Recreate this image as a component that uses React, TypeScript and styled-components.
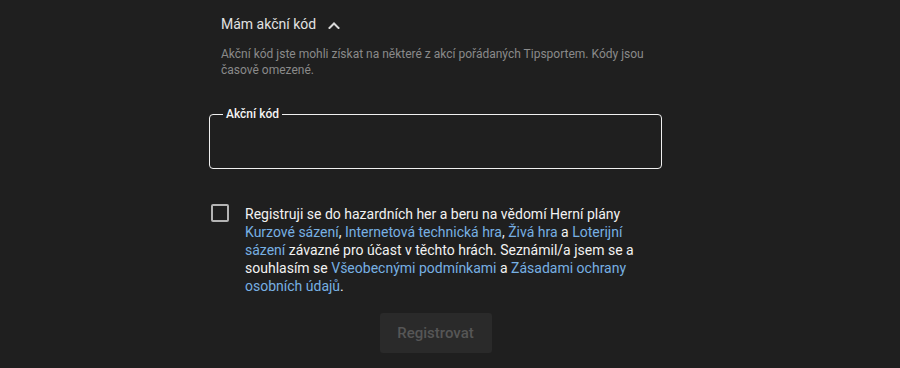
import styled, { createGlobalStyle } from 'styled-components';

const GlobalStyle = createGlobalStyle`
  html, body {
    margin: 0;
    padding: 0;
    background: #1f1f1f;
  }
  body {
    font-family: Roboto, "Noto Sans", Arial, sans-serif;
    color: #e6e6e6;
  }
`;

function ChevronUp () {
  return (
    <svg width="12" height="8" viewBox="0 0 12 8" fill="none">
      <path d="M1.5 7 L6 2.5 L10.5 7" stroke="#d8d8d8" strokeWidth="2" strokeLinecap="square" />
    </svg>
  );
}

function App () {
  return (
    <>
      <GlobalStyle />
      <Page>
        <Form>
          <Toggle type="button">
            Mám akční kód
            <ChevronUp />
          </Toggle>

          <Hint>
            Akční kód jste mohli získat na některé z akcí pořádaných Tipsportem. Kódy jsou časově omezené.
          </Hint>

          <Field>
            <legend>Akční kód</legend>
            <input type="text" />
          </Field>

          <Consent>
            <Box type="checkbox" />
            <ConsentText>
              Registruji se do hazardních her a beru na vědomí Herní plány{' '}
              <Link href="#">Kurzové sázení</Link>, <Link href="#">Internetová technická hra</Link>,{' '}
              <Link href="#">Živá hra</Link> a <Link href="#">Loterijní sázení</Link> závazné pro účast v těchto
              hrách. Seznámil/a jsem se a souhlasím se <Link href="#">Všeobecnými podmínkami</Link> a{' '}
              <Link href="#">Zásadami ochrany osobních údajů</Link>.
            </ConsentText>
          </Consent>

          <Actions>
            <Submit type="button" disabled>Registrovat</Submit>
          </Actions>
        </Form>
      </Page>
    </>
  );
}

const Page = styled.div`
  width: 900px;
  height: 368px;
  overflow: hidden;
  box-sizing: border-box;
  padding-left: 209px;
`;

const Form = styled.div`
  width: 453px;
  display: flex;
  flex-direction: column;
`;

const Toggle = styled.button`
  display: flex;
  align-items: center;
  gap: 12px;
  align-self: flex-start;
  margin: 14px 0 0 12px;
  padding: 0;
  border: none;
  background: none;
  font-family: inherit;
  font-size: 14px;
  font-weight: 400;
  color: #e2e2e2;
  line-height: 20px;
  cursor: pointer;

  svg {
    margin-top: 2px;
  }
`;

const Hint = styled.p`
  margin: 12px 0 0 12px;
  padding-right: 4px;
  font-size: 12px;
  line-height: 16px;
  color: #8a8a8a;
`;

const Field = styled.fieldset`
  margin: 29px 0 0 0;
  padding: 0 12px;
  height: 62px;
  box-sizing: border-box;
  border: 1px solid #f0f0f0;
  border-radius: 4px;

  legend {
    margin-left: 1px;
    padding: 0 3px;
    font-size: 12px;
    font-weight: 500;
    line-height: 14px;
    color: #f4f4f4;
  }

  input {
    width: 100%;
    height: 40px;
    border: none;
    background: transparent;
    outline: none;
    color: #fff;
    font-family: inherit;
    font-size: 14px;
  }
`;

const Consent = styled.label`
  display: flex;
  align-items: flex-start;
  gap: 16px;
  margin: 35px 0 0 2px;
  cursor: pointer;
`;

const Box = styled.input`
  appearance: none;
  flex: none;
  width: 18px;
  height: 18px;
  margin: 0;
  border: 2px solid #b4b4b4;
  border-radius: 2px;
  background: transparent;
`;

const ConsentText = styled.span`
  margin-top: 1px;
  width: 390px;
  font-size: 14px;
  line-height: 18px;
  color: #f2f2f2;
`;

const Link = styled.a`
  color: #77b0e3;
  text-decoration: none;
`;

const Actions = styled.div`
  display: flex;
  justify-content: center;
  margin-top: 18px;
`;

const Submit = styled.button`
  width: 112px;
  height: 40px;
  border: none;
  border-radius: 3px;
  background: #2a2a2a;
  color: #565656;
  font-family: inherit;
  font-size: 15px;
  font-weight: 500;
`;

export default App;
